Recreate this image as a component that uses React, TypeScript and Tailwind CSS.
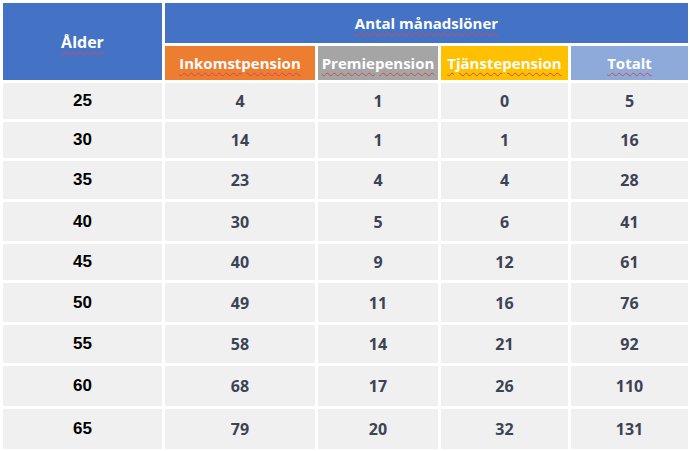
import React from 'react';

const rows: { age: number; inkomst: number; premie: number; tjanste: number; totalt: number; h: string }[] = [
  { age: 25, inkomst: 4, premie: 1, tjanste: 0, totalt: 5, h: 'h-[36px]' },
  { age: 30, inkomst: 14, premie: 1, tjanste: 1, totalt: 16, h: 'h-[36px]' },
  { age: 35, inkomst: 23, premie: 4, tjanste: 4, totalt: 28, h: 'h-[38px]' },
  { age: 40, inkomst: 30, premie: 5, tjanste: 6, totalt: 41, h: 'h-[39px]' },
  { age: 45, inkomst: 40, premie: 9, tjanste: 12, totalt: 61, h: 'h-[36px]' },
  { age: 50, inkomst: 49, premie: 11, tjanste: 16, totalt: 76, h: 'h-[39px]' },
  { age: 55, inkomst: 58, premie: 14, tjanste: 21, totalt: 92, h: 'h-[38px]' },
  { age: 60, inkomst: 68, premie: 17, tjanste: 26, totalt: 110, h: 'h-[40px]' },
  { age: 65, inkomst: 79, premie: 20, tjanste: 32, totalt: 131, h: 'h-[40px]' },
];

const spell = 'underline decoration-wavy decoration-[#d24b4b] decoration-1 underline-offset-[3px]';

const HeadCell: React.FC<{ bg: string; children: React.ReactNode }> = ({ bg, children }) => (
  <div className={`${bg} flex items-center justify-center text-white text-[15px] font-bold`}>
    <span className={spell}>{children}</span>
  </div>
);

const App: React.FC = () => {
  return (
    <div className="w-[690px] h-[451px] bg-white font-['Open_Sans',sans-serif]">
      <div className="grid grid-cols-[159px_150px_120px_127px_117px] grid-rows-[40px_34px] gap-[3px] pt-[3px] pl-[3px]">
        <div className="row-span-2 bg-[#4472c4] flex items-center justify-center text-white text-[16px] font-bold">
          <span className={spell}>Ålder</span>
        </div>
        <div className="col-span-4 bg-[#4472c4] flex items-center justify-center text-white text-[15px] font-bold">
          <span className={spell}>Antal månadslöner</span>
        </div>
        <HeadCell bg="bg-[#ed7d31]">Inkomstpension</HeadCell>
        <HeadCell bg="bg-[#a5a5a5]">Premiepension</HeadCell>
        <HeadCell bg="bg-[#ffc000]">Tjänstepension</HeadCell>
        <HeadCell bg="bg-[#8eaadb]">Totalt</HeadCell>
      </div>
      <div className="flex flex-col gap-[3px] pt-[3px] pl-[3px]">
        {rows.map((r) => (
          <div key={r.age} className={`grid grid-cols-[159px_150px_120px_127px_117px] gap-[3px] ${r.h}`}>
            <div className="bg-[#f0f0f0] flex items-center justify-center text-black text-[17px] font-bold font-['Liberation_Sans',sans-serif]">
              {r.age}
            </div>
            {[r.inkomst, r.premie, r.tjanste, r.totalt].map((v, i) => (
              <div key={i} className="bg-[#f0f0f0] flex items-center justify-center text-[#3b4354] text-[16px] font-bold">
                {v}
              </div>
            ))}
          </div>
        ))}
      </div>
    </div>
  );
};

export default App;
